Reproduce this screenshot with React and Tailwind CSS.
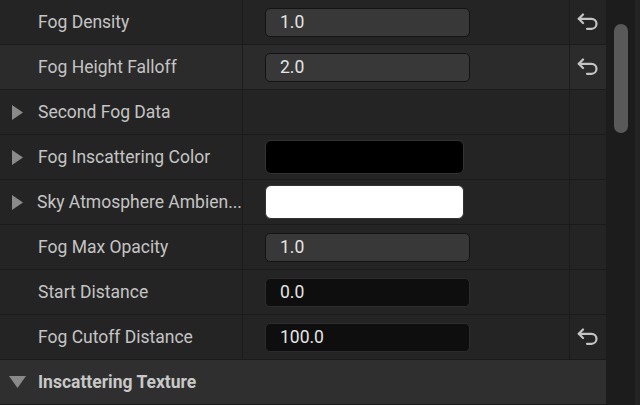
import React from "react";

const rows = [
  { label: "Fog Density", kind: "num", value: "1.0", reset: true },
  { label: "Fog Height Falloff", kind: "num", value: "2.0", reset: true, hover: true },
  { label: "Second Fog Data", expand: true },
  { label: "Fog Inscattering Color", expand: true, kind: "color", color: "bg-black" },
  { label: "Sky Atmosphere Ambien...", expand: true, kind: "color", color: "bg-white" },
  { label: "Fog Max Opacity", kind: "num", value: "1.0" },
  { label: "Start Distance", kind: "dark", value: "0.0" },
  { label: "Fog Cutoff Distance", kind: "dark", value: "100.0", reset: true },
];

const Triangle = ({ down }) =>
  down ? (
    <svg width="17" height="12" viewBox="0 0 17 12" className="shrink-0">
      <polygon points="0,0 17,0 8.5,12" fill="#8a8a8a" />
    </svg>
  ) : (
    <svg width="11" height="15" viewBox="0 0 11 15" className="shrink-0">
      <polygon points="0,0 11,7.5 0,15" fill="#8a8a8a" />
    </svg>
  );

// UE-style reset arrow
const ResetIcon = () => (
  <svg width="22" height="18" viewBox="0 0 22 18" fill="none" stroke="#c4c4c4" strokeWidth="2.2" strokeLinecap="round" strokeLinejoin="round">
    <path d="M6 1.5 L1.8 5.8 L6 10" />
    <path d="M1.8 5.8 H14.5 a5 5 0 0 1 0 10 H10" />
  </svg>
);

const ValueField = ({ row }) => {
  if (row.kind === "num") {
    return (
      <div className="w-[205px] h-[29px] rounded-[5px] border border-[#131313] bg-[#383838] flex items-center pl-[14px] text-[#e4e4e4] text-[17.5px]">
        {row.value}
      </div>
    );
  }
  if (row.kind === "dark") {
    return (
      <div className="w-[205px] h-[29px] rounded-[5px] border border-[#2c2c2c] bg-[#0e0e0e] flex items-center pl-[14px] text-[#e4e4e4] text-[17.5px]">
        {row.value}
      </div>
    );
  }
  if (row.kind === "color") {
    return (
      <div className={`w-[199px] h-[34px] rounded-[6px] border border-[#333333] ${row.color}`} />
    );
  }
  return null;
};

export default function App() {
  return (
    <div
      className="w-[640px] h-[405px] bg-[#232323] flex overflow-hidden select-none"
      style={{ fontFamily: "Roboto, 'Noto Sans', sans-serif" }}
    >
      <div className="w-[606px] flex flex-col">
        {rows.map((row, i) => (
          <div
            key={i}
            className={`h-[45px] flex border-b border-[#1b1b1b] ${row.hover ? "bg-[#2b2b2b]" : "bg-[#242424]"}`}
          >
            <div className="w-[243px] border-r border-[#1b1b1b] flex items-center">
              <div className="w-[38px] flex pl-[12px]">
                {row.expand && <Triangle />}
              </div>
              <span className="text-[17.5px] text-[#c4c4c4] whitespace-nowrap">{row.label}</span>
            </div>
            <div className="w-[327px] border-r border-[#1b1b1b] flex items-center pl-[22px]">
              <ValueField row={row} />
            </div>
            <div className="flex-1 flex items-center justify-center">
              {row.reset && <ResetIcon />}
            </div>
          </div>
        ))}
        <div className="h-[45px] flex items-center bg-[#2f2f2f] border-b border-[#1b1b1b]">
          <div className="w-[38px] flex pl-[9px]">
            <Triangle down />
          </div>
          <span className="text-[17.5px] font-bold text-[#c8c8c8]">Inscattering Texture</span>
        </div>
      </div>
      <div className="w-[29px] bg-[#1c1c1c] flex justify-center pt-[24px] pl-[1px]">
        <div className="w-[14px] h-[109px] rounded-full bg-[#595959]" />
      </div>
      <div className="flex-1 bg-[#232323]" />
    </div>
  );
}
